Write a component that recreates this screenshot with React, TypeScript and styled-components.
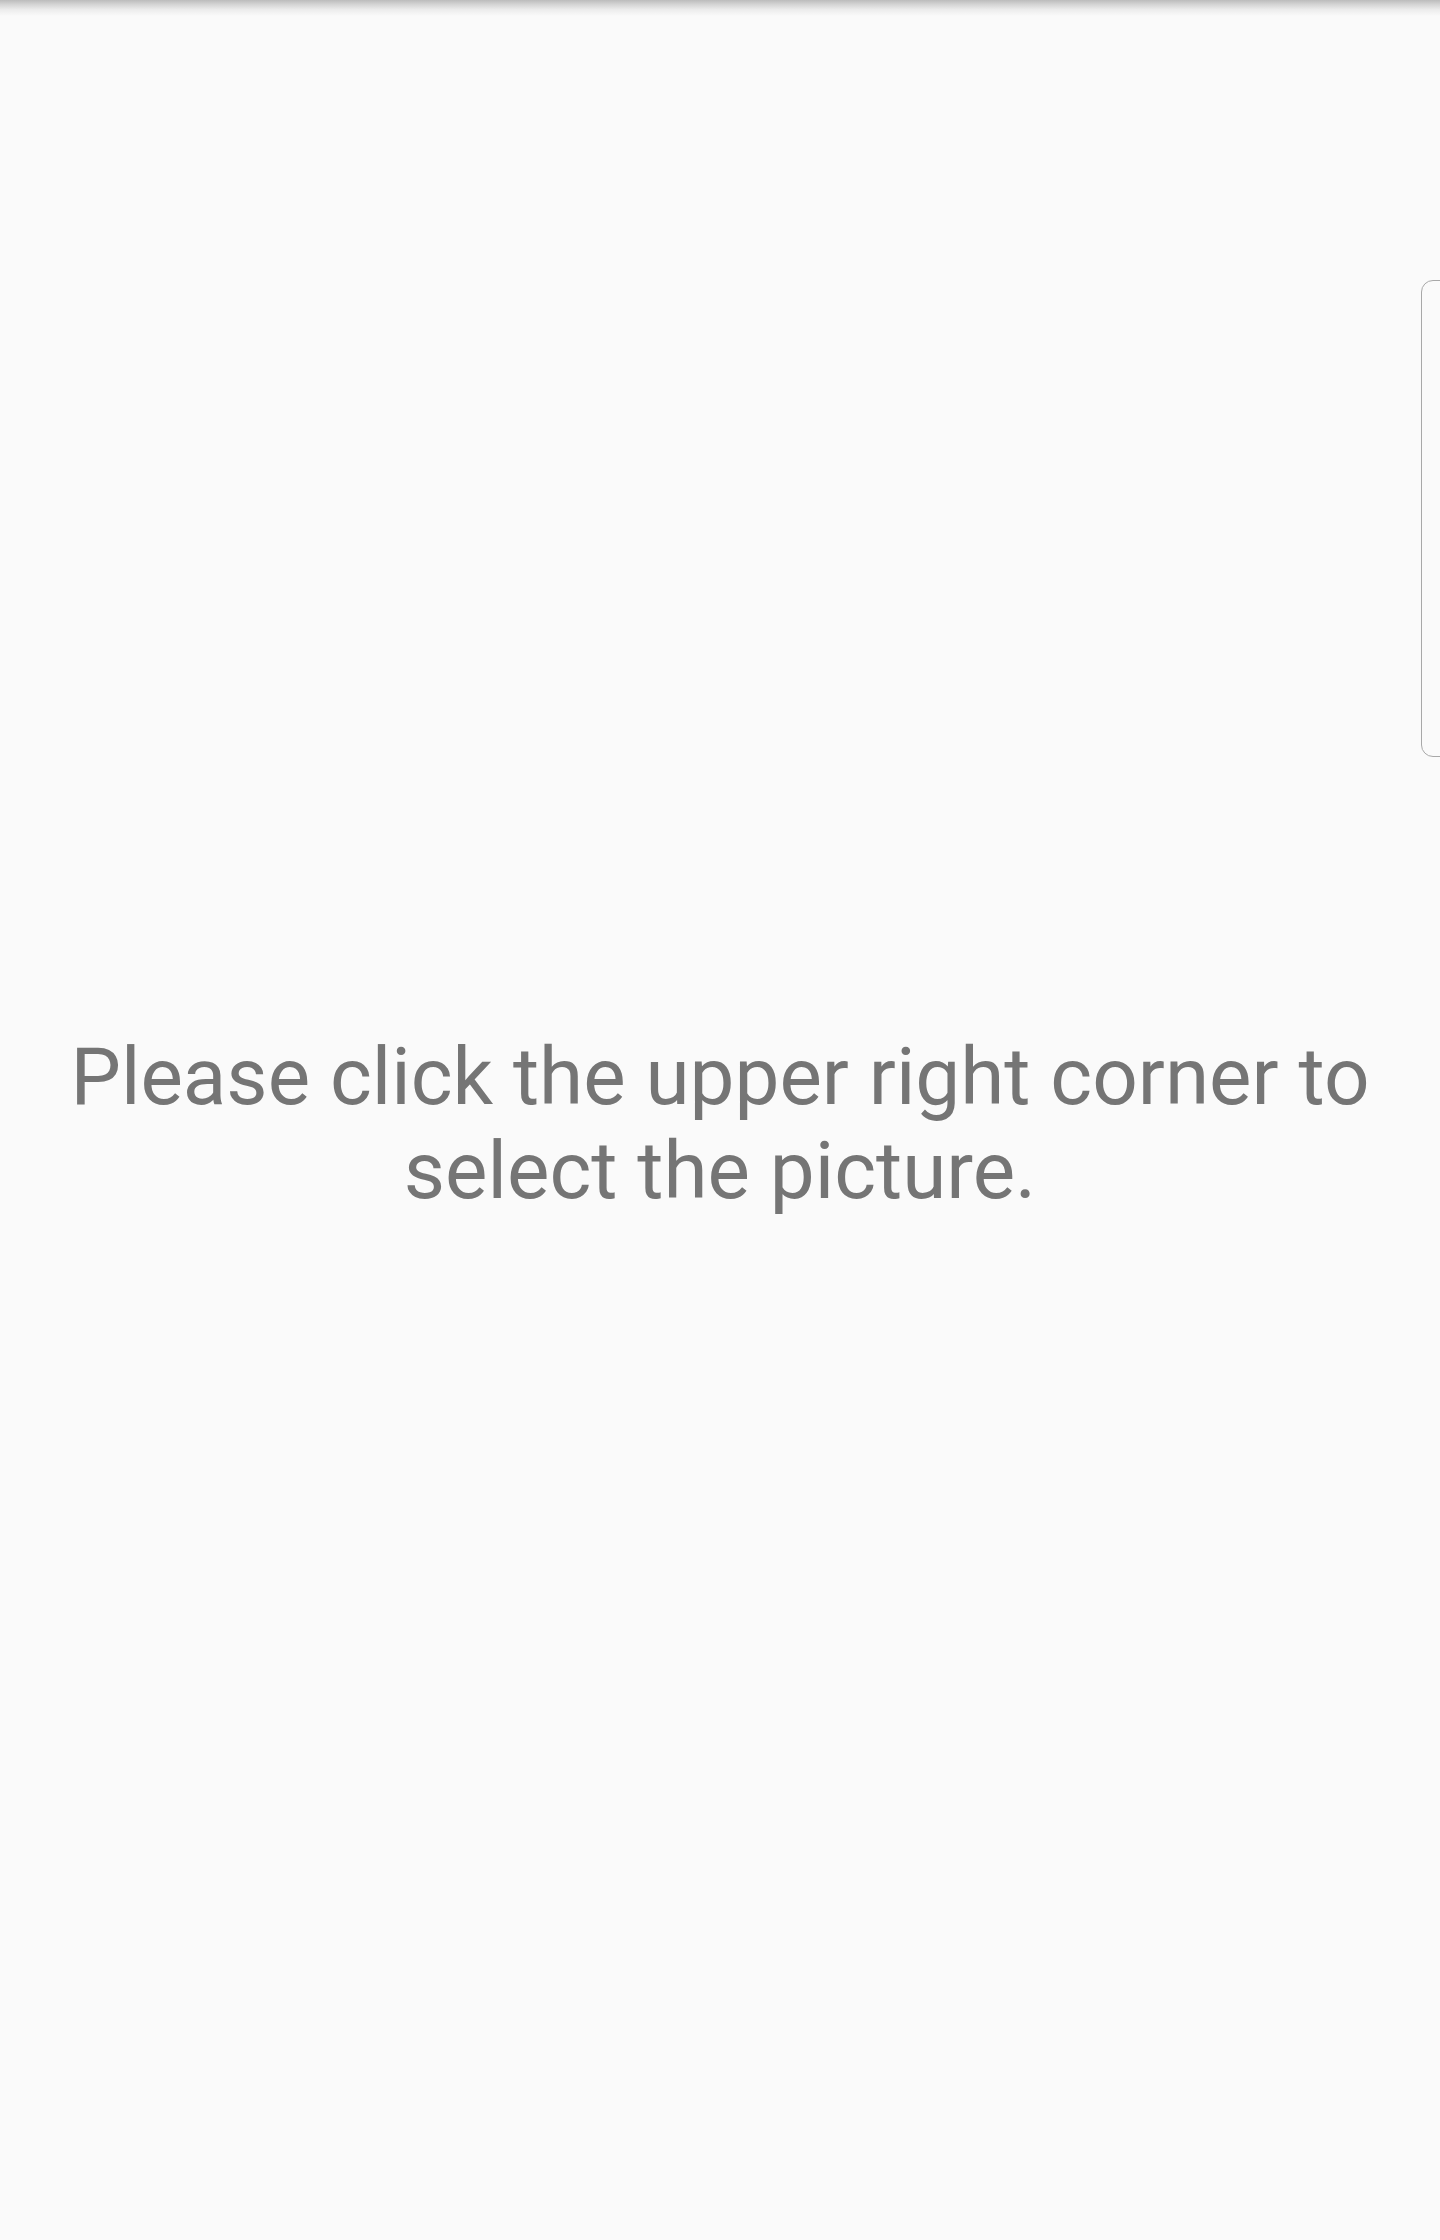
import React from "react";
import styled, { createGlobalStyle } from "styled-components";

const Global = createGlobalStyle`
  html, body { margin: 0; padding: 0; background: #fafafa; }
  body { font-family: Roboto, "Noto Sans", sans-serif; }
`;

const Screen = styled.div`
  position: relative;
  width: 1440px;
  height: 2240px;
  background: #fafafa;
  overflow: hidden;
  display: flex;
  align-items: center;
  justify-content: center;
`;

const TopShadow = styled.div`
  position: absolute;
  top: 0;
  left: 0;
  right: 0;
  height: 16px;
  background: linear-gradient(to bottom, #bcbcbc 0%, #d6d6d6 30%, #ececec 60%, #fafafa 100%);
`;

const EdgeHandle = styled.div`
  position: absolute;
  top: 280px;
  left: 1421px;
  width: 40px;
  height: 477px;
  border: 1.5px solid #a8a8a8;
  border-radius: 12px;
  box-sizing: border-box;
`;

const Message = styled.p`
  margin: 0;
  padding: 8px 40px 0;
  font-family: Roboto, "Noto Sans", sans-serif;
  font-size: 80px;
  line-height: 94px;
  color: #757575;
  text-align: center;
`;

export default function App() {
  return (
    <>
      <Global />
      <Screen>
        <TopShadow />
        <EdgeHandle />
        <Message>
          Please click the upper right corner to
          <br />
          select the picture.
        </Message>
      </Screen>
    </>
  );
}
